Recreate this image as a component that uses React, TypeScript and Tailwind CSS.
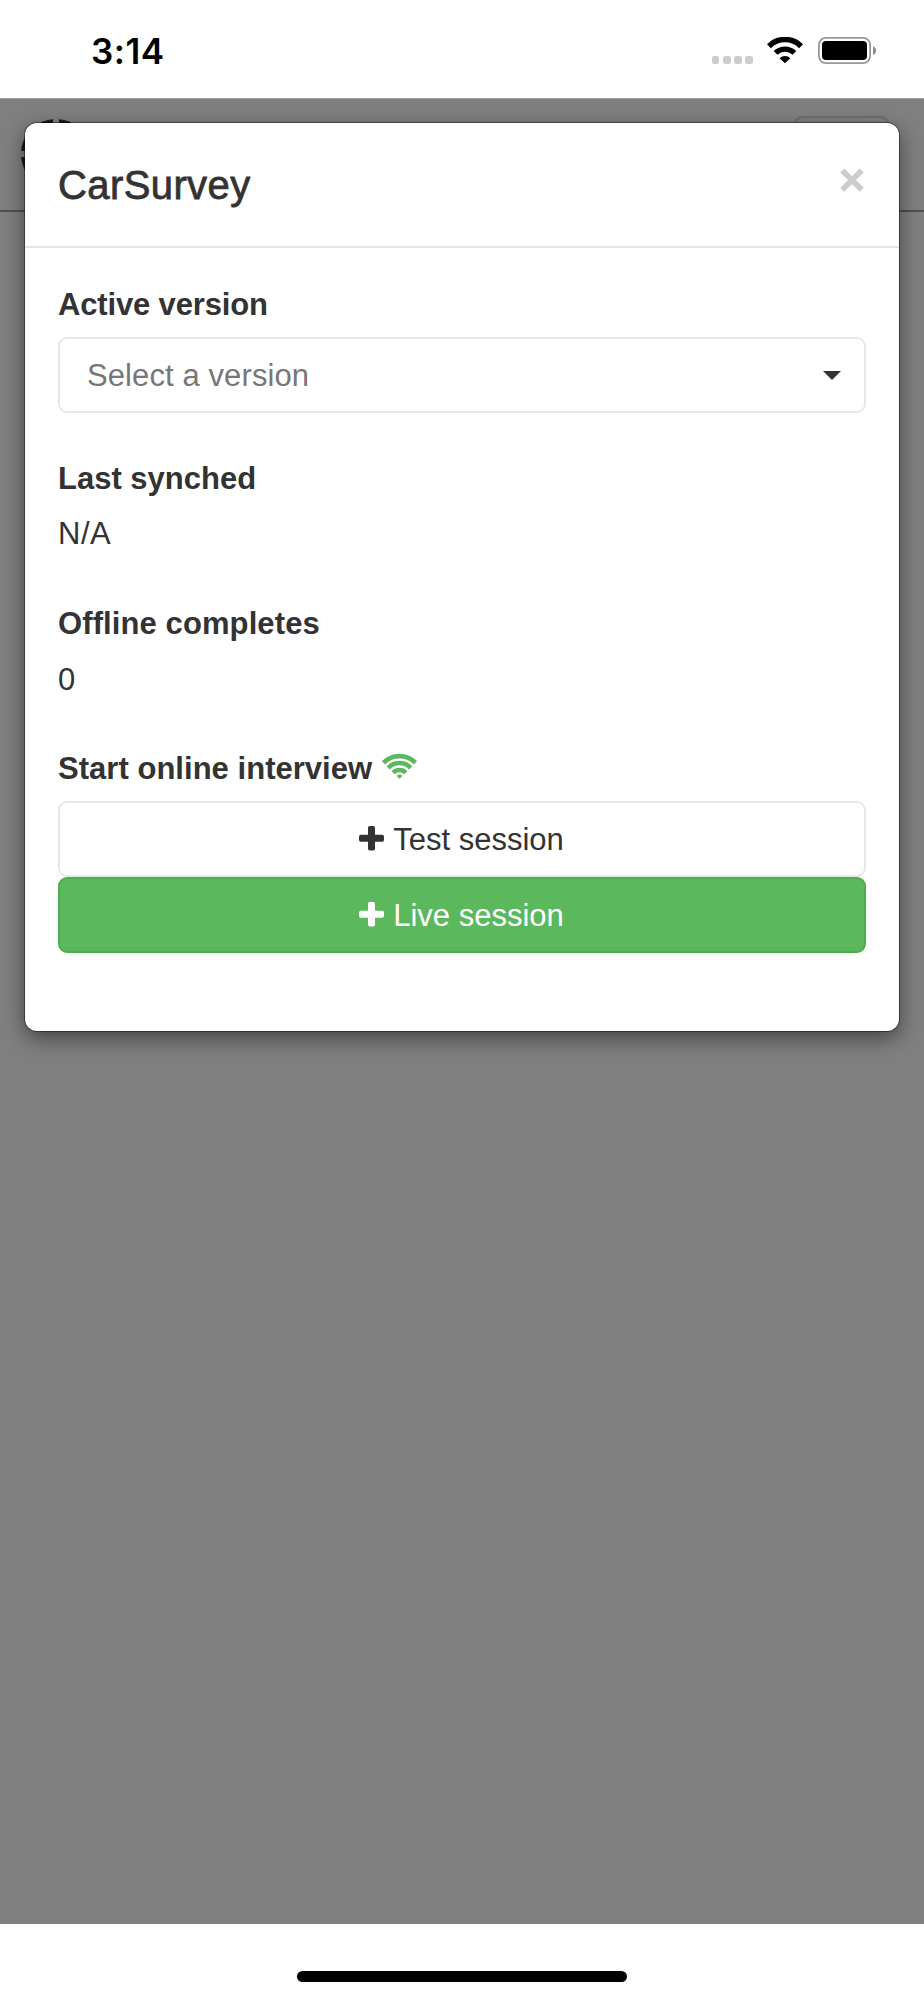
import React from "react";

function SignalDots() {
  return (
    <div className="flex gap-[3.5px]">
      {[0, 1, 2, 3].map((i) => (
        <span key={i} className="h-[7.5px] w-[7.7px] rounded-[2.5px] bg-[#cccccc]" />
      ))}
    </div>
  );
}

function StatusWifi() {
  return (
    <svg width="36" height="27" viewBox="0 0 36 27" fill="none" stroke="#000">
      <path d="M1.9 9.2A22.8 22.8 0 0 1 34.1 9.2" strokeWidth="5.6" />
      <path d="M8.6 15.9A13.5 13.5 0 0 1 27.4 15.9" strokeWidth="5.4" />
      <path d="M18 26.2L12.6 21.2A7.8 7.8 0 0 1 23.4 21.2Z" fill="#000" stroke="none" />
    </svg>
  );
}

function Battery() {
  return (
    <svg width="59" height="28" viewBox="0 0 59 28" fill="none">
      <rect x="0.9" y="0.9" width="51.2" height="25.2" rx="7" stroke="#999" strokeWidth="1.8" />
      <rect x="4" y="4" width="45" height="19" rx="4" fill="#000" />
      <path d="M55 9.2C59.2 10.5 59.2 16.6 55 17.9Z" fill="#8f8f8f" />
    </svg>
  );
}

function OnlineIcon() {
  return (
    <svg width="35" height="25" viewBox="0 0 35 25" fill="none" stroke="#5cb85c" className="-mt-[5px]">
      <path d="M1.5 8.8A22.6 22.6 0 0 1 33.5 8.8" strokeWidth="4.7" />
      <path d="M6.3 13.8A15.6 15.6 0 0 1 28.7 13.8" strokeWidth="4.6" />
      <path d="M11.2 18.7A8.8 8.8 0 0 1 23.8 18.7" strokeWidth="4.4" />
      <path d="M17.5 24.8L14.6 21.9A4.2 4.2 0 0 1 20.4 21.9Z" fill="#5cb85c" stroke="none" />
    </svg>
  );
}

function PlusIcon() {
  return (
    <svg width="25" height="25" viewBox="0 0 25 25" fill="currentColor" className="mr-[9px] -mt-[3px]">
      <rect x="0" y="8.8" width="25" height="7" rx="1.8" />
      <rect x="9" y="0" width="7" height="24.5" rx="1.8" />
    </svg>
  );
}

function Label({ children }: { children: React.ReactNode }) {
  return <div className="flex h-11 items-center pt-0.5 text-[31px] leading-[44px] font-bold">{children}</div>;
}

export default function App() {
  return (
    <div className="flex h-[2000px] w-[924px] flex-col overflow-hidden bg-white font-['Liberation_Sans',Arial,sans-serif] text-[#333333]">
      <header className="flex h-[98px] shrink-0 items-start justify-between pr-[47px] pl-[91px]">
        <span className="pt-[29px] font-['Inter',sans-serif] text-[35px] leading-[44px] font-semibold tracking-[0.5px] text-black">3:14</span>
        <div className="flex items-start pt-[37px]">
          <div className="pt-[19px]">
            <SignalDots />
          </div>
          <div className="ml-[14px]">
            <StatusWifi />
          </div>
          <div className="ml-[15px]">
            <Battery />
          </div>
        </div>
      </header>

      <main className="relative h-[1826px] shrink-0 border-t border-[#9c9c9c] bg-[#808080]">
        <div className="flex h-[113px] items-start justify-between border-b-2 border-[#505050] pr-[34px] pl-[21px]">
          <svg width="70" height="70" viewBox="0 0 70 70" className="mt-[19.5px]">
            <circle cx="35" cy="35" r="27" fill="none" stroke="#1a1a1a" strokeWidth="16" />
            <path d="M35 0V70M0 35H70" stroke="#808080" strokeWidth="6" />
          </svg>
          <div className="mt-[17px] h-[76px] w-[97px] rounded-[10px] border-2 border-[#6e6e6e]" />
        </div>

        <section
          role="dialog"
          className="absolute top-6 left-[25px] h-[908px] w-[874px] rounded-[12px] bg-white shadow-[0_0_0_1px_rgba(0,0,0,0.4),0_7px_22px_rgba(0,0,0,0.5)]"
        >
          <div className="flex h-[125px] items-start justify-between border-b-2 border-[#e5e5e5] pr-[34px] pl-[33px]">
            <h4 className="pt-[38px] text-[40px] leading-[48px] tracking-[0.4px] [-webkit-text-stroke:0.8px_#333333]">CarSurvey</h4>
            <button className="pt-[31px] text-[45px] leading-[52px] font-bold text-[#cccccc] [-webkit-text-stroke:0.6px_#cccccc]">×</button>
          </div>

          <div className="flex flex-col px-[33px] pt-[34px]">
            <Label>
              <span className="tracking-[-0.15px]">Active version</span>
            </Label>
            <div className="mt-[11px] flex h-[76px] items-center justify-between rounded-[9px] border-2 border-[#e7e7e7] pr-[23px] pl-[27px]">
              <span className="pt-0.5 text-[31px] leading-[44px] tracking-[0.1px] text-[#777777]">Select a version</span>
              <svg width="18" height="9" viewBox="0 0 18 9">
                <path d="M0 0H18L9 9Z" fill="#333" />
              </svg>
            </div>

            <div className="mt-[43px]">
              <Label>Last synched</Label>
              <div className="mt-3 h-11 text-[31px] leading-[44px] tracking-[0.5px]">N/A</div>
            </div>

            <div className="mt-[45px]">
              <Label>
                <span className="tracking-[0.1px]">Offline completes</span>
              </Label>
              <div className="mt-3 h-11 pt-px text-[31px] leading-[44px]">0</div>
            </div>

            <div className="mt-[45px]">
              <Label>
                <span className="mr-[10px] tracking-[0.03px]">Start online interview</span>
                <OnlineIcon />
              </Label>
              <button className="mt-[11px] flex h-[76px] w-full items-center justify-center rounded-[9px] border-2 border-[#e7e7e7] pt-0.5 pr-px text-[31px] leading-[44px]">
                <PlusIcon />
                Test session
              </button>
              <button className="flex h-[76px] w-full items-center justify-center rounded-[9px] border-2 border-[#4cae4c] bg-[#5cb85c] pt-0.5 pr-px text-[31px] leading-[44px] text-white">
                <PlusIcon />
                Live session
              </button>
            </div>
          </div>
        </section>
      </main>

      <footer className="flex h-[76px] justify-center pt-[47px]">
        <div className="h-[11px] w-[330px] rounded-full bg-black" />
      </footer>
    </div>
  );
}
